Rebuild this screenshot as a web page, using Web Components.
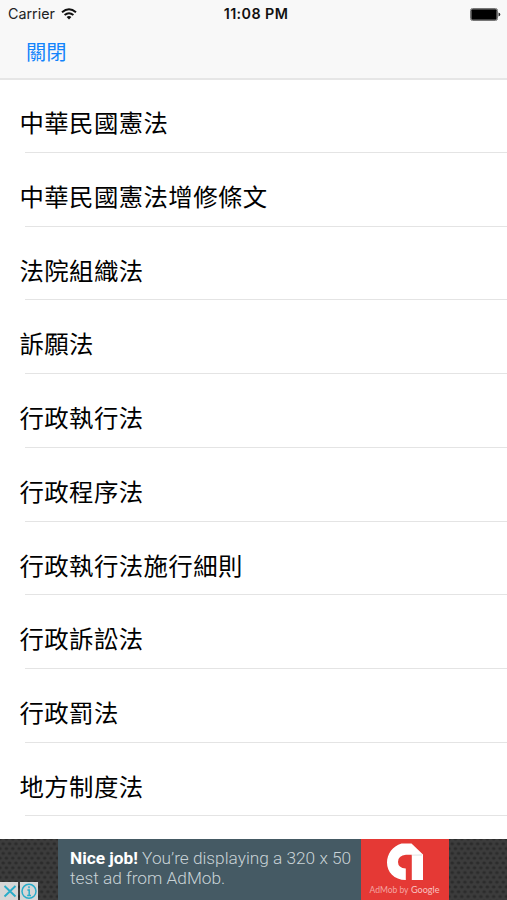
<!DOCTYPE html>
<html lang="zh-Hant">
<head>
<meta charset="utf-8">
<title>法規</title>
<style>
    body {
        margin: 0;
        background: #fff;
        font-family: Inter, "Noto Sans CJK TC", sans-serif;
    }
</style>
</head>
<body>
<law-app></law-app>

<script>
class StatusBar extends HTMLElement {
    constructor() {
        super();
        this.attachShadow({ mode: "open" });
        this.shadowRoot.innerHTML = `
            <style>
                :host {
                    display: grid;
                    grid-template-columns: 1fr auto 1fr;
                    align-items: center;
                    height: 27px;
                    padding: 0 6px 0 8px;
                    box-sizing: border-box;
                    font-size: 14px;
                    line-height: 28px;
                    color: #222;
                }
                .left { display: flex; align-items: center; gap: 6px; }
                .left span { font-size: 14.3px; }
                .time { font-weight: 600; font-size: 14.3px; letter-spacing: .42px; color: #111; margin-left: 3px; }
                .battery { justify-self: end; }
                svg { display: block; }
            </style>
            <div class="left">
                <span>${this.dataset.carrier}</span>
                <svg width="16" height="12" viewBox="0 0 16 12" fill="none" stroke="#111" stroke-width="2">
                    <path d="M1 4.2Q8 -1.6 15 4.2"/>
                    <path d="M3.6 7Q8 3.4 12.4 7"/>
                    <path d="M8 11.6L5.6 9Q8 7.2 10.4 9Z" fill="#111" stroke="none"/>
                </svg>
            </div>
            <div class="time">${this.dataset.time}</div>
            <svg class="battery" width="31" height="13" viewBox="0 0 31 13">
                <rect x=".5" y=".5" width="27" height="12" rx="2" fill="#fff" stroke="#777"/>
                <rect x="1.3" y="1.3" width="25.4" height="10.4" rx="1"/>
                <path d="M28.5 4.5Q30.3 5 30.3 6.5T28.5 8.5Z" fill="#222"/>
            </svg>
        `;
    }
}

class NavBar extends HTMLElement {
    constructor() {
        super();
        this.attachShadow({ mode: "open" });
        this.shadowRoot.innerHTML = `
            <style>
                :host {
                    display: block;
                    height: 80px;
                    box-sizing: border-box;
                    background: #f8f8f8;
                    border-bottom: 2px solid #e6e6e6;
                }
                .actions {
                    display: flex;
                    align-items: center;
                    height: 51px;
                    padding-left: 26px;
                }
                button {
                    border: 0;
                    padding: 0;
                    background: none;
                    color: #1384fb;
                    font: inherit;
                    font-size: 20.3px;
                    line-height: 51px;
                }
            </style>
            <slot name="status"></slot>
            <div class="actions"><button><slot></slot></button></div>
        `;
    }
}

class LawRow extends HTMLElement {
    constructor() {
        super();
        this.attachShadow({ mode: "open" });
        this.shadowRoot.innerHTML = `
            <style>
                :host {
                    display: flex;
                    flex-direction: column;
                    height: 73.7px;
                    color: #000;
                    font-size: 24.4px;
                    letter-spacing: .42px;
                }
                .title {
                    flex: 1;
                    line-height: 88px;
                    height: 0;
                    padding-left: 19.5px;
                    white-space: nowrap;
                }
                .line { height: 1px; margin-left: 25px; background: #e4e4e4; }
            </style>
            <div class="title"><slot></slot></div>
            <div class="line"></div>
        `;
    }
}

class AdBanner extends HTMLElement {
    constructor() {
        super();
        this.attachShadow({ mode: "open" });
        this.shadowRoot.innerHTML = `
            <style>
                :host {
                    display: grid;
                    grid-template-columns: 58px 303px 88px 58px;
                    height: 61px;
                    font-family: Roboto, sans-serif;
                    overflow: hidden;
                }
                .mesh {
                    display: flex;
                    align-items: flex-end;
                    gap: 2px;
                    background-color: #3c3c3c;
                    background-image:
                        radial-gradient(ellipse 2.4px 2px, #2b2b2b 40%, transparent 100%),
                        radial-gradient(ellipse 2.4px 2px, #2b2b2b 40%, transparent 100%);
                    background-size: 6.4px 9.6px;
                    background-position: 0 0, 3.2px 4.8px;
                }
                .mesh svg { display: block; }
                .copy {
                    background: #455a64;
                    color: #c9d3d7;
                    font-size: 17.25px;
                    font-weight: 300;
                    line-height: 20px;
                    padding: 9px 0 0 12px;
                    white-space: nowrap;
                }
                .copy b { font-weight: 700; color: #fff; }
                .brand { background: #e53935; }
                .brand svg { display: block; }
            </style>
            <div class="mesh">
                <svg width="18" height="18" viewBox="0 0 18 18">
                    <rect width="18" height="18" fill="#d6d6d6"/>
                    <path d="M4.5 4L15.5 14.5M15.5 4L4.5 14.5" stroke="#28acc9" stroke-width="1.9"/>
                </svg>
                <svg width="18" height="18" viewBox="0 0 18 18">
                    <rect width="18" height="18" fill="#d6d6d6"/>
                    <circle cx="9" cy="9.3" r="7" fill="none" stroke="#28acc9" stroke-width="1.5"/>
                    <path d="M9 4.3V6.2M7.4 8H9.2V13.5M7.2 13.5H11" fill="none" stroke="#28acc9" stroke-width="1.5"/>
                </svg>
            </div>
            <div class="copy"><b>Nice job!</b> You’re displaying a 320 x 50<br>test ad from AdMob.</div>
            <div class="brand">
                <svg width="88" height="61" viewBox="0 0 88 61" font-family="Lato, sans-serif" font-size="9.6">
                    <path fill="#fff" d="M40.5 4.4H50.5L62 15.5V41H50.8V15.8H45Q37 16.5 37 23Q37 28.8 44.8 29.6V41C33 41 26 33 26 23.5C26 15 31.5 7 40.5 4.4Z"/>
                    <path fill="#ddd" d="M50.8 15.8L61 15.4V16.4L50.8 16.6Z"/>
                    <text x="8.5" y="54" fill="#f4a5a1" textLength="39" lengthAdjust="spacingAndGlyphs">AdMob by</text>
                    <text x="50" y="54" fill="#f8c4c1" textLength="28.5" lengthAdjust="spacingAndGlyphs">Google</text>
                </svg>
            </div>
            <div class="mesh"></div>
        `;
    }
}

class LawApp extends HTMLElement {
    constructor() {
        super();
        this.attachShadow({ mode: "open" });

        const laws = [
            "中華民國憲法",
            "中華民國憲法增修條文",
            "法院組織法",
            "訴願法",
            "行政執行法",
            "行政程序法",
            "行政執行法施行細則",
            "行政訴訟法",
            "行政罰法",
            "地方制度法"
        ];

        this.shadowRoot.innerHTML = `
            <style>
                :host {
                    display: flex;
                    flex-direction: column;
                    height: 900px;
                    overflow: hidden;
                }
                main { flex: 1; min-height: 0; overflow: hidden; margin-top: -.6px; }
                nav-bar, ad-banner { flex: none; }
            </style>
            <nav-bar>
                <status-bar slot="status" data-carrier="Carrier" data-time="11:08 PM"></status-bar>
                關閉
            </nav-bar>
            <main>
                ${laws.map(law => `<law-row>${law}</law-row>`).join("")}
            </main>
            <ad-banner></ad-banner>
        `;
    }
}

customElements.define("status-bar", StatusBar);
customElements.define("nav-bar", NavBar);
customElements.define("law-row", LawRow);
customElements.define("ad-banner", AdBanner);
customElements.define("law-app", LawApp);
</script>
</body>
</html>
